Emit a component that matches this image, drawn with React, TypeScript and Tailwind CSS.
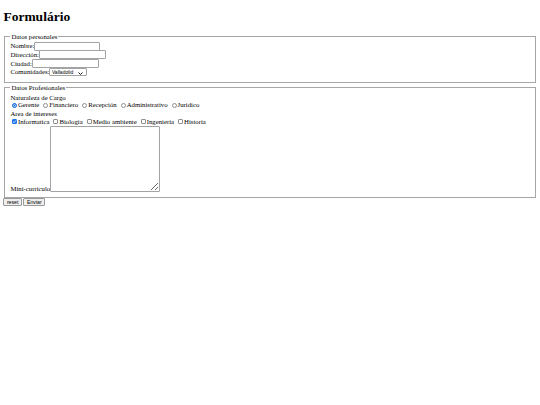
import React from "react"

const cargos = ["Gerente", "Financiero", "Recepción", "Administrativo", "Juridico"]
const intereses = ["Informatica", "Biologia", "Medio ambiente", "Ingenieria", "Historia"]

function TextField({ label, width }: { label: string; width: string }) {
  return (
    <div className="flex h-[8.7px] items-center">
      <span>{label}</span>
      <input
        type="text"
        className={`h-[9px] ${width} rounded-[1px] border border-[#a3a3a3] bg-white px-[1px] outline-none`}
      />
    </div>
  )
}

export default function App() {
  return (
    <div className="min-h-[405px] w-[540px] bg-white px-[3.4px] font-['Liberation_Serif',serif] text-[6.75px] leading-[1.15] text-black">
      <h1 className="mb-[8.5px] mt-[9px] text-[13.5px] font-bold leading-[1.15]">Formulário</h1>

      <form>
        <fieldset className="mx-[1px] border border-[#a6a6a6] px-[5px] pb-[5px] pt-[1px]">
          <legend className="px-[1px]">Datos personales</legend>
          <TextField label="Nombre:" width="w-[66px]" />
          <TextField label="Dirección:" width="w-[67px]" />
          <TextField label="Ciudad:" width="w-[67px]" />
          <div className="flex h-[8.7px] items-center">
            <span>Comunidades:</span>
            <span className="relative flex h-[8px] w-[38px] items-center rounded-[1px] border border-[#a3a3a3] bg-white">
              <select
                defaultValue="Valladolid"
                className="h-full w-full appearance-none bg-transparent pl-[1.5px] font-['Liberation_Sans',sans-serif] text-[5px] leading-none outline-none"
              >
                <option>Valladolid</option>
                <option>Madrid</option>
                <option>Barcelona</option>
              </select>
              <svg
                viewBox="0 0 10 6"
                className="pointer-events-none absolute right-[3px] top-[2.5px] h-[3px] w-[5px]"
              >
                <path d="M1 1 L5 5 L9 1" fill="none" stroke="#000" strokeWidth="1.8" />
              </svg>
            </span>
          </div>
        </fieldset>

        <fieldset className="mx-[1px] mt-[1px] border border-[#a6a6a6] px-[5px] pb-[5px] pt-[1.5px]">
          <legend className="px-[1px]">Datos Profesionales</legend>
          <div className="h-[8.3px] leading-[10px]">Naturaleza de Cargo</div>
          <div className="flex h-[8.3px] items-center">
            {cargos.map((c, i) => (
              <label key={c} className="mr-[2.5px] flex items-center">
                <input
                  type="radio"
                  name="cargo"
                  defaultChecked={i === 0}
                  className="ml-[1.5px] mr-[1px] h-[5px] w-[5px] appearance-none rounded-full border-[0.8px] border-[#8f8f8f] bg-white checked:border-[1.2px] checked:border-[#1a73e8] checked:bg-[#1a73e8] checked:shadow-[inset_0_0_0_0.6px_#fff]"
                />
                {c}
              </label>
            ))}
          </div>
          <div className="h-[8.3px] leading-[9px]">Area de intereses</div>
          <div className="flex h-[8.3px] items-center">
            {intereses.map((c, i) => (
              <label key={c} className="mr-[2.5px] flex items-center">
                <span className="relative ml-[1.5px] mr-[1px] flex">
                  <input
                    type="checkbox"
                    defaultChecked={i === 0}
                    className="h-[5px] w-[5px] appearance-none rounded-[1px] border-[0.8px] border-[#8f8f8f] bg-white checked:border-[#1a73e8] checked:bg-[#1a73e8]"
                  />
                  {i === 0 && (
                    <svg viewBox="0 0 10 10" className="pointer-events-none absolute inset-0 h-[5px] w-[5px]">
                      <path d="M2 5.2 L4.2 7.3 L8 2.8" fill="none" stroke="#fff" strokeWidth="1.6" />
                    </svg>
                  )}
                </span>
                {c}
              </label>
            ))}
          </div>
          <div className="flex items-end">
            <span className="leading-[6px]">Mini-curriculo</span>
            <textarea className="h-[66px] w-[110px] resize rounded-[1px] border border-[#a3a3a3] bg-white outline-none" />
          </div>
        </fieldset>

        <div className="mt-[0.5px] flex gap-[1.5px] font-['Liberation_Sans',sans-serif] text-[5.2px]">
          <button
            type="reset"
            className="h-[8px] rounded-[1px] border border-[#9a9a9a] bg-[#efefef] px-[2.5px] leading-none"
          >
            reset
          </button>
          <button
            type="submit"
            className="h-[8px] rounded-[1px] border border-[#9a9a9a] bg-[#efefef] px-[2.5px] leading-none"
          >
            Enviar
          </button>
        </div>
      </form>
    </div>
  )
}
